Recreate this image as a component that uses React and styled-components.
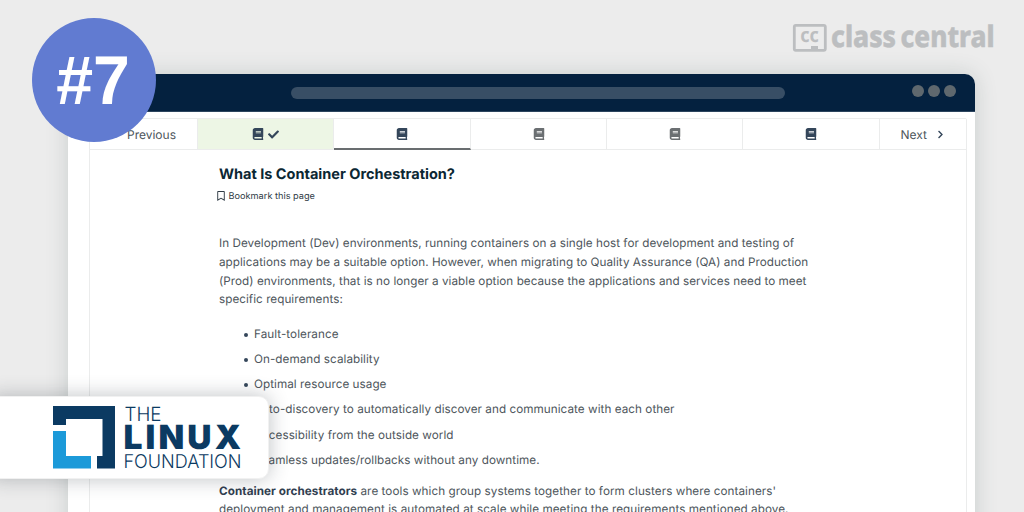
import React from "react";
import styled, { createGlobalStyle } from "styled-components";
import { FaBook, FaCheck, FaChevronLeft, FaChevronRight, FaRegBookmark } from "react-icons/fa";

const GlobalStyle = createGlobalStyle`
  * { box-sizing: border-box; }
  body { margin: 0; background: #ececec; font-family: Inter, "Liberation Sans", sans-serif; text-rendering: geometricPrecision; }
`;

const Stage = styled.main`
  position: relative;
  width: 1024px;
  height: 512px;
  padding: 74px 49px 0 68px;
  overflow: hidden;
  background: #ececec;
`;

const BrandLogo = styled.svg`
  position: absolute;
  left: 790px;
  top: 18px;
  overflow: visible;
`;

const Window = styled.section`
  height: 470px;
  border-radius: 10px 10px 0 0;
  background: #fff;
  box-shadow: 0 0 22px rgba(60, 85, 80, 0.2);
`;

const TitleBar = styled.header`
  display: flex;
  align-items: center;
  height: 38px;
  padding: 0 19px 0 223px;
  border-radius: 10px 10px 0 0;
  background: #04213f;
  border-bottom: 1px solid #2c455e;
`;

const AddressBar = styled.div`
  width: 494px;
  height: 12px;
  border-radius: 6px;
  background: #384e65;
`;

const Dots = styled.div`
  display: flex;
  gap: 4px;
  margin: 0 0 4px auto;
`;

const Dot = styled.span`
  width: 12px;
  height: 12px;
  border-radius: 50%;
  background: #5f686e;
`;

const Frame = styled.div`
  margin: 6px 8px 0 21px;
  height: 420px;
  border: 1px solid #ebecec;
  border-radius: 2px 2px 0 0;
`;

const Tabs = styled.nav`
  display: grid;
  grid-template-columns: 108px 136px 137px 136px 136px 137px 1fr;
  height: 31px;
  border-bottom: 1px solid #ebecec;
`;

const Tab = styled.div`
  display: flex;
  align-items: center;
  justify-content: center;
  gap: 4.5px;
  height: ${(p) => (p.$current ? "31px" : "30px")};
  padding-top: ${(p) => (p.$current ? "1px" : "0")};
  border-right: 1px solid ${(p) => (p.$last ? "transparent" : "#ebecec")};
  border-bottom: ${(p) => (p.$current ? "2px solid #696d70" : "0")};
  background: ${(p) => (p.$done ? "#edf6e5" : "#fff")};
  color: ${(p) => (p.$muted ? "#6b6f72" : "#34465a")};
`;

const NavTab = styled(Tab)`
  gap: ${(p) => (p.$last ? "9px" : "12px")};
  color: #4d555b;
  font-size: 12px;
  justify-content: ${(p) => (p.$last ? "flex-start" : "flex-end")};
  padding: ${(p) => (p.$last ? "0 0 0 20.5px" : "0 21px 0 0")};
  svg { color: #34465a; }
`;

const Article = styled.article`
  width: 620px;
  margin: 15px 0 0 129px;
  color: #4d555b;
  font-size: 11.7px;
  line-height: 18.75px;
`;

const Heading = styled.h1`
  margin: 0;
  color: #0b2733;
  font-size: 14.5px;
  line-height: 20px;
  font-weight: 700;
`;

const Bookmark = styled.div`
  display: flex;
  align-items: center;
  gap: 2.5px;
  margin: 4px 0 0 -3px;
  height: 16px;
  color: #303c46;
  font-size: 9.2px;
  svg { margin-bottom: 2px; }
`;

const Paragraph = styled.p`
  margin: 0;
  white-space: nowrap;
  letter-spacing: ${(p) => (p.$wide ? "0.06px" : "0.04px")};
  strong { font-weight: 700; color: #303e50; }
`;

const Intro = styled.div`margin-top: 29px;`;
const Outro = styled.div`margin-top: 9px;`;

const List = styled.ul`
  margin: 13px 0 0;
  padding: 0 0 0 35px;
  list-style: none;
`;

const Item = styled.li`
  display: flex;
  align-items: center;
  height: 25.1px;
  letter-spacing: 0.05px;
  &::before {
    content: "";
    width: 4px;
    height: 4px;
    margin: 1px 6px 0 -10px;
    border-radius: 50%;
    background: #34465a;
  }
`;

const Rank = styled.div`
  position: absolute;
  left: 32px;
  top: 18px;
  width: 124px;
  height: 124px;
  border-radius: 50%;
  background: #617bd1;
  color: #fff;
  font: 700 69px/126px "Liberation Sans", sans-serif;
  text-align: center;
`;

const RankLabel = styled.span`
  display: block;
  transform: translateX(-1px) scaleX(0.96);
`;

const Provider = styled.aside`
  position: absolute;
  left: -12px;
  top: 396px;
  width: 281px;
  height: 83px;
  border-radius: 10px;
  background: #fff;
  border: 1px solid #f1f1f1;
  box-shadow: 0 0 20px rgba(40, 50, 60, 0.3);
  svg { display: block; margin: 8px 0 0 62px; overflow: visible; }
`;

const ITEMS = [
  "Fault-tolerance",
  "On-demand scalability",
  "Optimal resource usage",
  "Auto-discovery to automatically discover and communicate with each other",
  "Accessibility from the outside world",
  "Seamless updates/rollbacks without any downtime.",
];

function ClassCentral() {
  return (
    <BrandLogo width="216" height="40" viewBox="790 18 216 40" fill="#bcbec0">
      <rect x="794.3" y="25.3" width="31" height="25" rx="1.5" fill="none" stroke="#bcbec0" strokeWidth="2.8" />
      <rect x="811" y="46" width="7" height="4" />
      <g fontFamily='"Noto Sans", sans-serif' fontWeight="800">
        <text x="800.2" y="42.3" fontSize="20" fontWeight="700" textLength="18.5" lengthAdjust="spacingAndGlyphs">cc</text>
        <text x="831" y="46.5" fontSize="29.5" textLength="65" lengthAdjust="spacingAndGlyphs" stroke="#bcbec0" strokeWidth="0.5">class</text>
        <text x="900.5" y="46.5" fontSize="29.5" textLength="94" lengthAdjust="spacingAndGlyphs" stroke="#bcbec0" strokeWidth="0.5">central</text>
      </g>
    </BrandLogo>
  );
}

function LinuxFoundation() {
  return (
    <svg width="192" height="66" viewBox="51 405 192 66">
      <path d="M53 406H115V468.5H97V456H102.5V419H66V425H53Z" fill="#0b3a62" />
      <path d="M53 431H66V456H91V468.5H53Z" fill="#1c9ad9" />
      <g fill="#0b3a62" fontFamily="Inter, sans-serif">
        <text x="124.5" y="421" fontSize="19.5" fontWeight="300" textLength="37" lengthAdjust="spacingAndGlyphs">THE</text>
        <text x="123.5" y="449" fontSize="33.5" fontWeight="900" textLength="117.5" lengthAdjust="spacing">LINUX</text>
        <text x="123.5" y="468.3" fontSize="19" fontWeight="300" textLength="118" lengthAdjust="spacingAndGlyphs">FOUNDATION</text>
      </g>
    </svg>
  );
}

export default function App() {
  return (
    <Stage>
      <GlobalStyle />
      <ClassCentral />
      <Window>
        <TitleBar>
          <AddressBar />
          <Dots><Dot /><Dot /><Dot /></Dots>
        </TitleBar>
        <Frame>
          <Tabs>
            <NavTab><FaChevronLeft size={9} />Previous</NavTab>
            <Tab $done><FaBook size={12} /><FaCheck size={11} /></Tab>
            <Tab $current><FaBook size={12} /></Tab>
            <Tab $muted><FaBook size={12} /></Tab>
            <Tab $muted><FaBook size={12} /></Tab>
            <Tab><FaBook size={12} /></Tab>
            <NavTab $last>Next<FaChevronRight size={9} /></NavTab>
          </Tabs>
          <Article>
            <Heading>What Is Container Orchestration?</Heading>
            <Bookmark><FaRegBookmark size={10} />Bookmark this page</Bookmark>
            <Intro>
              <Paragraph>In Development (Dev) environments, running containers on a single host for development and testing of</Paragraph>
              <Paragraph>applications may be a suitable option. However, when migrating to Quality Assurance (QA) and Production</Paragraph>
              <Paragraph>(Prod) environments, that is no longer a viable option because the applications and services need to meet</Paragraph>
              <Paragraph>specific requirements:</Paragraph>
            </Intro>
            <List>{ITEMS.map((t) => <Item key={t}>{t}</Item>)}</List>
            <Outro>
              <Paragraph $wide><strong>Container orchestrators</strong> are tools which group systems together to form clusters where containers'</Paragraph>
              <Paragraph $wide>deployment and management is automated at scale while meeting the requirements mentioned above.</Paragraph>
            </Outro>
          </Article>
        </Frame>
      </Window>
      <Rank><RankLabel>#7</RankLabel></Rank>
      <Provider><LinuxFoundation /></Provider>
    </Stage>
  );
}
